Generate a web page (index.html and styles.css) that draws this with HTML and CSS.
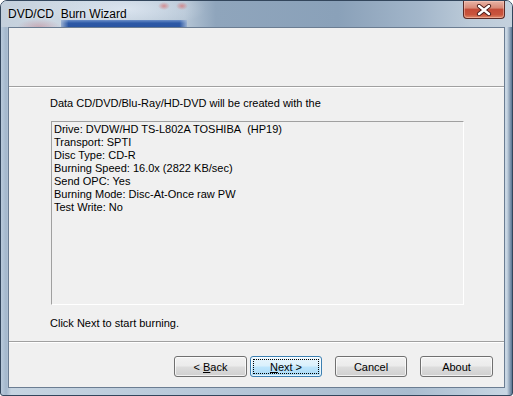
FILE: index.html
```html
<!DOCTYPE html>
<html>
<head>
<meta charset="utf-8">
<title>DVD/CD Burn Wizard</title>
<link rel="stylesheet" href="styles.css">
</head>
<body>
<div class="window">
	<div class="titlebar">
		<span class="title">DVD/CD&nbsp; Burn Wizard</span>
		<a href="javascript:;" class="close">
			<svg width="18" height="12" viewBox="0 0 18 12">
				<path d="M4 2 L14 10 M14 2 L4 10" stroke="#4a1c1a" stroke-width="4.2" stroke-linecap="round"/>
				<path d="M4 2 L14 10 M14 2 L4 10" stroke="#fff" stroke-width="2.4" stroke-linecap="round"/>
			</svg>
		</a>
	</div>
	<div class="client">
		<div class="header"></div>
		<div class="content">
			<p class="intro">Data CD/DVD/Blu-Ray/HD-DVD will be created with the</p>
			<div class="listbox">
				<div>Drive: DVDW/HD TS-L802A TOSHIBA&nbsp; (HP19)</div>
				<div>Transport: SPTI</div>
				<div>Disc Type: CD-R</div>
				<div>Burning Speed: 16.0x (2822 KB/sec)</div>
				<div>Send OPC: Yes</div>
				<div>Burning Mode: Disc-At-Once raw PW</div>
				<div>Test Write: No</div>
			</div>
			<p class="hint">Click Next to start burning.</p>
		</div>
		<div class="footer">
			<button class="btn back">&lt; <u>B</u>ack</button>
			<button class="btn next"><u>N</u>ext &gt;</button>
			<button class="btn cancel">Cancel</button>
			<button class="btn about">About</button>
		</div>
	</div>
</div>
</body>
</html>
```

FILE: styles.css
```css
* {margin:0; padding:0; box-sizing:border-box;}
body {background:#fff; font-family:"Liberation Sans", Arial, sans-serif; font-size:11px; color:#000;}

.window {width:513px; height:396px; border:1px solid #33465c; border-radius:7px 7px 3px 3px; overflow:hidden; display:flex; flex-direction:column;
	background:linear-gradient(to right, #b9cadb 0, #a3b7cc 1%, #c6d4e1 2%, #b7c8d9 40%, #a9bccf 80%, #c8d6e3 99%, #5c7694 100%);}

/* title bar, glass with a blurred desktop behind */
.titlebar {height:26px; flex:none; display:flex; justify-content:space-between; align-items:flex-start; padding-left:7px;
	background-color:#b0c0d0;
	background-image:
		radial-gradient(ellipse 6px 4px at 163px 5px, rgba(214,110,110,.7), rgba(214,110,110,0)),
		radial-gradient(ellipse 6px 4px at 181px 5px, rgba(214,110,110,.7), rgba(214,110,110,0)),
		linear-gradient(to right, rgba(180,198,220,.8), rgba(180,198,220,0) 6%, rgba(180,198,220,0) 94%, rgba(180,198,220,.8)),
		linear-gradient(to bottom, #6a8ec8, #2c58a6 45%, #2a55a2),
		radial-gradient(ellipse 80px 20px at 125px 8px, rgba(236,243,252,.6), rgba(236,243,252,0)),
		radial-gradient(ellipse 22px 8px at 38px 26px, rgba(196,128,140,.5), rgba(196,128,140,0)),
		linear-gradient(to right, #c4d0dc 0, #ccd7e2 10%, #b5c5d5 36%, #8fa5bc 42%, #8aa1b9 66%, #a3b6ca 82%, #bccbd9 92%, #c4d1dd 100%);
	background-repeat:no-repeat;
	background-position:0 0, 0 0, 60px 19px, 60px 19px, 0 0, 0 0, 0 0;
	background-size:100% 100%, 100% 100%, 126px 7px, 126px 7px, 100% 100%, 100% 100%, 100% 100%;}
.title {font-size:12px; line-height:26px; color:#000; text-shadow:0 0 3px rgba(255,255,255,.6);}

.close {width:42px; height:18px; margin-right:7px; display:flex; align-items:center; justify-content:center;
	border:1px solid #5a2a26; border-top:none; border-radius:0 0 4px 4px;
	background:linear-gradient(to bottom, #e8b4a6 0, #d98a78 40%, #c44c38 50%, #c9553d 80%, #de8a6a 100%);
	box-shadow:inset 0 0 0 1px rgba(255,210,200,.45);}

.client {flex:1; margin:0 7px 7px 7px; border:1px solid #6b7d92; background:#f0f0f0; display:flex; flex-direction:column;}

.header {height:59px; flex:none; border-bottom:1px solid #a0a0a0;}

.content {flex:1; border-top:1px solid #fff; padding:9px 0 0 41px;}
.intro {line-height:13px;}
.listbox {width:413px; height:184px; margin:11px 0 0 1px; padding:1px 2px; line-height:13px;
	border:1px solid #fff; border-top-color:#a0a0a0; border-left-color:#a0a0a0;}
.hint {line-height:13px; margin-top:12px;}

.footer {height:46px; flex:none; border-top:1px solid #a0a0a0; box-shadow:inset 0 1px #fff; display:flex; justify-content:flex-end; align-items:flex-start; padding:14px 11px 0 0;}

.btn {width:73px; height:21px; font-family:"Liberation Sans", Arial, sans-serif; font-size:11px; color:#000;
	border:1px solid #707070; border-radius:3px; cursor:pointer;
	background:linear-gradient(to bottom, #f2f2f2 0, #ebebeb 48%, #dddddd 52%, #cfcfcf 100%);
	box-shadow:inset 0 0 0 1px rgba(255,255,255,.7);}
.next {width:72px; margin-left:3px; border-color:#3c7fb1;
	background:linear-gradient(to bottom, #eaf6fd 0, #d9f0fc 48%, #bee6fd 52%, #a7d9f5 100%);
	outline:1px dotted #000; outline-offset:-4px;}
.cancel {width:72px; margin-left:13px;}
.about {margin-left:13px;}
```
